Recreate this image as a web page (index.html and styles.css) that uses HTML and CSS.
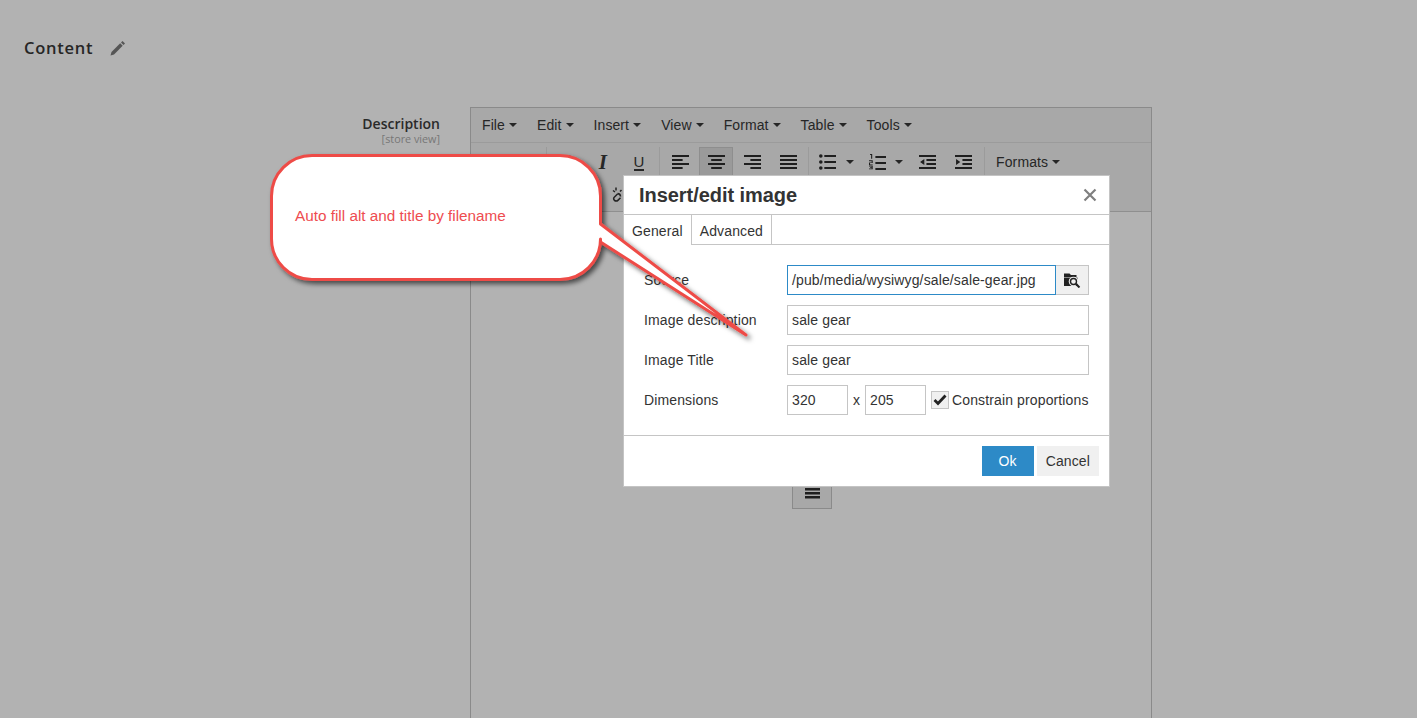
FILE: index.html
```html
<!DOCTYPE html>
<html lang="en">
<head>
<meta charset="utf-8">
<title>Insert/edit image</title>
<link rel="stylesheet" href="styles.css">
</head>
<body>
<main class="page">
  <header class="section-head">
    <h2 class="section-title">Content</h2>
    <svg class="pencil" width="16" height="16" viewBox="0 0 16 16"><path d="M.5 15.500l1-3.500 8.700-8.700 2.500 2.500L4 14.500z" fill="#555"/><path d="M11 2.500l1.500-1.500 2.500 2.500-1.500 1.500z" fill="#555"/></svg>
  </header>
  <section class="field">
    <div class="field-label">
      <div class="label-main">Description</div>
      <div class="label-scope">[store view]</div>
    </div>
    <div class="editor">
      <nav class="menubar">
        <span class="menu-item">File<i class="caret"></i></span>
        <span class="menu-item">Edit<i class="caret"></i></span>
        <span class="menu-item">Insert<i class="caret"></i></span>
        <span class="menu-item">View<i class="caret"></i></span>
        <span class="menu-item">Format<i class="caret"></i></span>
        <span class="menu-item">Table<i class="caret"></i></span>
        <span class="menu-item">Tools<i class="caret"></i></span>
      </nav>
      <div class="toolbar">
        <div class="tb-row">
          <div class="tb-spacer"></div>
          <div class="tb-group">
            <span class="tb-btn glyph-b">B</span>
            <span class="tb-btn glyph-i">I</span>
            <span class="tb-btn"><span class="glyph-u">U</span></span>
          </div>
          <div class="tb-group">
            <span class="tb-btn"><svg class="ico" viewBox="0 0 16 16" preserveAspectRatio="none"><path d="M0 1h16v2H0zM0 5h10v2H0zM0 9h16v2H0zM0 13h10v2H0z"/></svg></span>
            <span class="tb-btn active"><svg class="ico" viewBox="0 0 16 16" preserveAspectRatio="none"><path d="M0 1h16v2H0zM3 5h10v2H3zM0 9h16v2H0zM3 13h10v2H3z"/></svg></span>
            <span class="tb-btn"><svg class="ico" viewBox="0 0 16 16" preserveAspectRatio="none"><path d="M0 1h16v2H0zM6 5h10v2H6zM0 9h16v2H0zM6 13h10v2H6z"/></svg></span>
            <span class="tb-btn"><svg class="ico" viewBox="0 0 16 16" preserveAspectRatio="none"><path d="M0 1h16v2H0zM0 5h16v2H0zM0 9h16v2H0zM0 13h16v2H0z"/></svg></span>
          </div>
          <div class="tb-group lists">
            <span class="tb-split"><svg class="ico" viewBox="0 0 16 16" preserveAspectRatio="none"><path d="M5 1h11v2H5zM5 7h11v2H5zM5 13h11v2H5z"/><circle cx="1.700" cy="2" r="1.700"/><circle cx="1.700" cy="8" r="1.700"/><circle cx="1.700" cy="14" r="1.700"/></svg><i class="caret split-caret"></i></span>
            <span class="tb-split"><svg class="ico" viewBox="0 0 16 16" preserveAspectRatio="none"><path d="M6 2h10v2H6zM6 8h10v2H6zM6 14h10v2H6z"/><path d="M1 0h2v5H2V1H1zM0 6.500h3.500v3H1v1.500h2.500v1H0V9h2.500V7.500H0zM0 12.500h3.500V16H0v-.8h2.500v-.7H1v-.8h1.500v-.5H0z" transform="scale(1 .95)"/></svg><i class="caret split-caret"></i></span>
            <span class="tb-btn narrow"><svg class="ico" viewBox="0 0 16 16" preserveAspectRatio="none"><path d="M0 1h16v2H0zM7 5h9v2H7zM7 9h9v2H7zM0 13h16v2H0zM5 5v6L1 8z"/></svg></span>
            <span class="tb-btn"><svg class="ico" viewBox="0 0 16 16" preserveAspectRatio="none"><path d="M0 1h16v2H0zM7 5h9v2H7zM7 9h9v2H7zM0 13h16v2H0zM1 5v6l4-3z"/></svg></span>
          </div>
          <div class="tb-group last"><span class="tb-list">Formats<i class="caret"></i></span></div>
        </div>
        <div class="tb-row second">
          <span class="tb-btn"><svg class="unlink" viewBox="0 0 16 16"><path d="M5.500 7L2.500 10a2.400 2.400 0 0 0 3.400 3.400l2.600-2.600M8 4.500l1.500-1.500M4 .5v3M1 3.500l2 1.500M5.500 6.500c2 .2 3 1.500 3 3" fill="none" stroke="#222" stroke-width="1.500"/></svg></span>
        </div>
      </div>
      <div class="editor-body"></div>
    </div>
  </section>
</main>

<div class="float-btn"><svg class="ico-menu" viewBox="0 0 15 11"><path d="M0 0h15v2.500H0zM0 4h15v2.500H0zM0 8h15v2.500H0z"/></svg></div>

<div class="dialog" role="dialog">
  <div class="dialog-head">
    <h1 class="dialog-title">Insert/edit image</h1>
    <svg class="close" width="14" height="14" viewBox="0 0 14 14"><path d="M1.500 1.500l11 11M12.500 1.500l-11 11" stroke="#7f7f7f" stroke-width="2.200" fill="none"/></svg>
  </div>
  <div class="tabs">
    <span class="tab current">General</span>
    <span class="tab">Advanced</span>
  </div>
  <div class="form">
    <div class="form-row">
      <label class="form-label">Source</label>
      <div class="combo">
        <span class="input focus grow">/pub/media/wysiwyg/sale/sale-gear.jpg</span>
        <span class="browse"><svg width="18" height="16" viewBox="0 0 18 16"><path d="M1 1.500h5.500l1.500 1.500h5.500v2H1zM1 5.500h13.500V14H1z" fill="#222"/><circle cx="10.500" cy="9.500" r="4.800" fill="#f0f0f0"/><circle cx="10.500" cy="9.500" r="3" fill="none" stroke="#222" stroke-width="1.400"/><path d="M12.800 11.800l3.700 3.700" stroke="#222" stroke-width="2"/></svg></span>
      </div>
    </div>
    <div class="form-row">
      <label class="form-label">Image description</label>
      <span class="input grow">sale gear</span>
    </div>
    <div class="form-row">
      <label class="form-label">Image Title</label>
      <span class="input grow">sale gear</span>
    </div>
    <div class="form-row">
      <label class="form-label">Dimensions</label>
      <span class="input dim">320</span>
      <span class="times">x</span>
      <span class="input dim">205</span>
      <span class="check"><svg width="14" height="12" viewBox="0 0 14 12"><path d="M1.500 6l3.500 3.500 7.500-8" fill="none" stroke="#222" stroke-width="2.800"/></svg></span>
      <span class="check-label">Constrain proportions</span>
    </div>
  </div>
  <div class="dialog-foot">
    <span class="btn primary">Ok</span>
    <span class="btn">Cancel</span>
  </div>
</div>

<div class="callout">
  <svg class="callout-shape" width="500" height="205" viewBox="260 145 500 205">
    <defs><filter id="sh" x="-10%" y="-10%" width="125%" height="125%"><feDropShadow dx="3" dy="3" stdDeviation="2.500" flood-color="#000" flood-opacity=".6"/></filter></defs>
    <path filter="url(#sh)" d="M312 155.500H560a40.500 40.500 0 0 1 40.500 40.500V224L746 335 600.500 242v-3a40.500 40.500 0 0 1-40.500 40.500H312A40.500 40.500 0 0 1 271.500 239V196A40.500 40.500 0 0 1 312 155.500z" fill="#fff" stroke="#ee4c47" stroke-width="3" stroke-linejoin="round"/>
  </svg>
  <span class="callout-text">Auto fill alt and title by filename</span>
</div>
</body>
</html>
```

FILE: styles.css
```css
* { box-sizing: border-box; }
html, body { margin: 0; height: 100%; }
body {
  background: #b2b2b2;
  font-family: "Liberation Sans", Arial, sans-serif;
  font-size: 14px;
  letter-spacing: .13px;
  color: #262626;
  overflow: hidden;
  position: relative;
}
.page { display: flex; flex-direction: column; }
.section-head {
  display: flex;
  align-items: flex-start;
  gap: 17px;
  padding: 36px 0 0 24px;
  height: 107px;
}
.section-title {
  margin: 0;
  width: 69px;
  font: 600 16.500px/24px "Open Sans", sans-serif;
  letter-spacing: .75px;
  color: #262626;
}
.pencil { margin-top: 4px; }
.field { display: flex; gap: 30px; }
.field-label { width: 440px; text-align: right; font-family: "Open Sans", sans-serif; padding-top: 8px; letter-spacing: 0; }
.label-main { font-size: 14px; font-weight: 600; line-height: 18px; color: #2a2a2a; }
.label-scope { font-size: 10.800px; line-height: 12px; margin-top: -.5px; color: #777; }
.editor {
  width: 682px;
  height: 640px;
  border: 1px solid #8a8a8a;
  display: flex;
  flex-direction: column;
}
.menubar {
  display: flex;
  height: 35px;
  align-items: center;
  background: #a8a8a8;
  border-bottom: 1px solid #9b9b9b;
  padding-left: 1px;
  letter-spacing: .1px;
}
.menu-item { display: flex; align-items: center; padding: 0 10px; height: 30px; }
.caret {
  display: inline-block;
  width: 0;
  height: 0;
  margin-left: 4px;
  border-left: 4px solid transparent;
  border-right: 4px solid transparent;
  border-top: 4px solid #262626;
}
.toolbar {
  height: 69px;
  background: #a8a8a8;
  border-bottom: 1px solid #8f8f8f;
  padding-top: 4px;
  display: flex;
  flex-direction: column;
  gap: 3px;
}
.tb-row { display: flex; height: 30px; }
.tb-row.second { padding-left: 131px; }
.tb-spacer { width: 75px; }
.tb-group {
  display: flex;
  gap: 2px;
  border-left: 1px solid #9b9b9b;
  padding: 0 3px;
  height: 30px;
}
.tb-group.lists { padding: 0 4px 0 2px; }
.tb-btn {
  width: 34px;
  height: 30px;
  display: flex;
  align-items: center;
  justify-content: center;
  border: 1px solid transparent;
}
.tb-btn.narrow { margin-left: -1px; }
.tb-btn.active { background: #9a9a9a; border-color: #8e8e8e; }
.ico { width: 17px; height: 16px; fill: #1f1f1f; display: block; flex: none; }
.ico-menu { width: 15px; height: 11px; fill: #1f1f1f; display: block; }
.glyph-b { font-weight: 700; font-size: 16px; color: #262626; }
.glyph-i { font: italic 700 21px "Liberation Serif", serif; color: #262626; }
.glyph-u { font-size: 15px; line-height: 15px; border-bottom: 2px solid #262626; }
.tb-split { width: 48px; height: 30px; display: flex; align-items: center; padding-left: 8px; }
.split-caret { margin-left: 9px; }
.tb-split:first-child .split-caret { margin-left: 10px; }
.tb-list { display: flex; align-items: center; height: 30px; padding-left: 8px; width: 84px; }
.unlink { width: 16px; height: 16px; display: block; }
.tb-row.second .tb-btn { margin-left: 1px; }
.editor-body { flex: 1; }

.float-btn {
  position: absolute;
  left: 792px;
  top: 470px;
  width: 40px;
  height: 39px;
  background: #a8a8a8;
  border: 1px solid #8a8a8a;
  display: flex;
  justify-content: center;
  padding: 17px 0 0 1px;
}
.dialog {
  position: absolute;
  left: 623px;
  top: 175px;
  width: 487px;
  height: 312px;
  background: #fff;
  border: 1px solid #c4c4c4;
  color: #333;
  display: flex;
  flex-direction: column;
}
.dialog-head {
  height: 39px;
  display: flex;
  align-items: center;
  justify-content: space-between;
  padding: 0 12px 0 15px;
  border-bottom: 1px solid #c5c5c5;
  flex: none;
}
.dialog-title { margin: 0; font-size: 20px; line-height: 24px; font-weight: 700; letter-spacing: -.05px; color: #333; }
.tabs { display: flex; height: 30px; flex: none; border-bottom: 1px solid #c5c5c5; }
.tab {
  padding: 8px 8px 0;
  line-height: 16px;
  height: 29px;
  border-right: 1px solid #c5c5c5;
  background: #fff;
}
.tab.current { height: 30px; }
.form { flex: 1; padding: 20px 20px 0; display: flex; flex-direction: column; gap: 10px; border-bottom: 1px solid #c5c5c5; }
.form-row { display: flex; align-items: center; height: 30px; }
.form-label { width: 143px; flex: none; color: #333; }
.input {
  height: 30px;
  border: 1px solid #c5c5c5;
  padding: 0 4px;
  display: flex;
  align-items: center;
  background: #fff;
  color: #333;
}
.grow { flex: 1; }
.focus { border-color: #2d8ac7; }
.combo { flex: 1; display: flex; }
.browse {
  width: 33px;
  height: 30px;
  background: #f0f0f0;
  border: 1px solid #c5c5c5;
  border-left: 0;
  display: flex;
  align-items: center;
  justify-content: center;
}
.dim { width: 61px; }
.times { width: 17px; text-align: center; }
.check {
  width: 18px;
  height: 18px;
  margin-left: 5px;
  background: #f0f0f0;
  border: 1px solid #c5c5c5;
  display: flex;
  align-items: center;
  justify-content: center;
}
.check-label { margin-left: 3px; white-space: nowrap; }
.dialog-foot { height: 50px; flex: none; display: flex; justify-content: flex-end; gap: 3px; padding: 10px 10px 0 0; }
.btn { height: 30px; padding: 0 9px; display: flex; align-items: center; background: #f0f0f0; color: #333; }
.btn.primary { width: 52px; justify-content: center; background: #2d8ac7; color: #fff; }

.callout { position: absolute; left: 260px; top: 145px; width: 500px; height: 205px; }
.callout-shape { display: block; }
.callout-text {
  position: absolute;
  left: 35px;
  top: 62px;
  font-size: 15.300px;
  line-height: 18px;
  letter-spacing: 0;
  color: #ee4c50;
  white-space: nowrap;
}
```
